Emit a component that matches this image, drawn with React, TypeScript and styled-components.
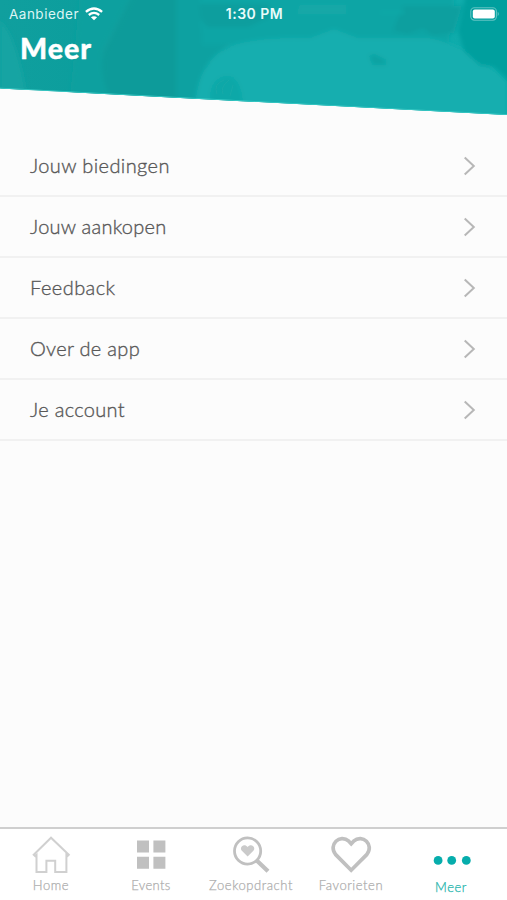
import React from 'react';
import styled, { createGlobalStyle } from 'styled-components';

const GlobalStyle = createGlobalStyle`
  * { box-sizing: border-box; }
  body { margin: 0; background: #fcfcfc; font-family: Lato, sans-serif; }
`;

const Screen = styled.div`
  display: flex;
  flex-direction: column;
  width: 507px;
  height: 900px;
  background: #fcfcfc;
  overflow: hidden;
`;

const Header = styled.header`
  position: relative;
  height: 136px;
  flex: none;
  color: #fff;
`;

const HeaderArt = styled.svg`
  position: absolute;
  inset: 0;
  display: block;
`;

const StatusBar = styled.div`
  position: relative;
  display: grid;
  grid-template-columns: 1fr auto 1fr;
  align-items: center;
  height: 27px;
  padding: 0 7px 0 9px;
  font-family: Inter, sans-serif;
`;

const Carrier = styled.div`
  display: flex;
  align-items: center;
  gap: 6px;
  color: #dcf5f4;
`;

const CarrierName = styled.span`
  font-size: 13.5px;
  line-height: 18px;
  letter-spacing: 0.5px;
`;

const Clock = styled.span`
  font-size: 14px;
  line-height: 18px;
  font-weight: 600;
  letter-spacing: 0.5px;
  color: #e9fbfa;
`;

const BatterySlot = styled.div`
  display: flex;
  justify-content: flex-end;
`;

const Title = styled.h1`
  position: relative;
  margin: 4px 0 0 20px;
  font-size: 28.5px;
  line-height: 34px;
  font-weight: 900;
  letter-spacing: 1px;
  -webkit-text-stroke: 0.4px #fff;
`;

const Menu = styled.nav`
  flex: 1;
`;

const MenuRow = styled.div`
  display: flex;
  align-items: center;
  justify-content: space-between;
  height: 61px;
  padding: 0 31px 0 30px;
  border-bottom: 2px solid #f1f1f1;
`;

const MenuLabel = styled.span<{ $spacing: number }>`
  margin-bottom: 2px;
  font-size: 20px;
  line-height: 26px;
  font-weight: 300;
  color: #585858;
  -webkit-text-stroke: 0.35px #585858;
  letter-spacing: ${(p) => p.$spacing}px;
`;

const TabBar = styled.footer`
  display: grid;
  grid-template-columns: repeat(5, 1fr);
  height: 73px;
  padding: 0 6px 0 1px;
  border-top: 2px solid #cfcfcf;
  background: #fff;
`;

const Tab = styled.div<{ $active?: boolean }>`
  display: flex;
  flex-direction: column;
  align-items: center;
  padding-top: ${(p) => (p.$active ? 8 : 6)}px;
`;

const TabLabel = styled.span<{ $spacing: number; $active?: boolean }>`
  font-size: 13px;
  line-height: 16px;
  margin-top: 2px;
  font-weight: 300;
  white-space: nowrap;
  color: ${(p) => (p.$active ? '#1fb5ad' : '#aeaeae')};
  -webkit-text-stroke: 0.25px currentColor;
  letter-spacing: ${(p) => p.$spacing}px;
`;

const HeaderPicture = () => (
  <HeaderArt width="507" height="136" viewBox="0 0 507 136">
    <defs>
      <clipPath id="slant"><path d="M0 0H507V115L0 88.5Z" /></clipPath>
      <linearGradient id="teal" x1="0" x2="1">
        <stop offset="0" stopColor="#109f9e" />
        <stop offset=".38" stopColor="#079d9c" />
        <stop offset=".5" stopColor="#13a8a8" />
        <stop offset="1" stopColor="#0dacac" />
      </linearGradient>
      <filter id="soft"><feGaussianBlur stdDeviation="2" /></filter>
    </defs>
    <g clipPath="url(#slant)">
      <path d="M0 0H507V120H0Z" fill="url(#teal)" />
      <g filter="url(#soft)">
        <path d="M0 20Q18 38 27 98H0Z" fill="#18a4a3" />
        <path d="M80 -5H132L103 50Q99 72 111 98H70Z" fill="#10a09f" />
        <path d="M133 -5H176V105H112Q98 70 104 52Z" fill="#079b9a" />
        <path d="M176 -5H200L207 28H245L205 65L195 105H176Z" fill="#0ea1a1" />
        <path d="M200 -5H455L448 45H202Z" fill="#10a5a5" />
        <path d="M200 4H269V17L248 27H208Q200 23 200 4Z" fill="#0b9e9e" />
        <path d="M195 105Q198 60 230 46Q260 36 310 38L334 29L358 38H430Q475 47 507 83V120H195Z" fill="#13aeaf" />
        <path d="M211 105Q207 81 225 76Q241 74 243 105Z" fill="#10a8a8" />
        <path d="M403 6H462L454 33L432 35L423 28L408 34L393 31Z" fill="#0a9f9f" />
        <path d="M466 -5H515V86L494 67L480 65L464 51L458 30Z" fill="#049f9e" />
        <path d="M369 56L374 54L386 60V65H373Z" fill="#0ca3a3" />
        <path d="M300 5H346V14H297ZM380 11H405V14H380Z" fill="#15a8a7" />
      </g>
      <path d="M217 94Q213 84 224 80M223 94Q220 87 229 80M230 96L233 85" fill="none" stroke="#20abaa" strokeWidth="1" opacity=".55" />
      <path d="M0 88.2L507 114.7" stroke="#39c9c5" strokeWidth="1" />
    </g>
  </HeaderArt>
);

const Wifi = () => (
  <svg width="18" height="14" viewBox="0 0 18 14" fill="none" stroke="#fff" strokeWidth="2.3">
    <path d="M.9 4.9Q9-2 17.1 4.9M3.8 8Q9 3.7 14.2 8" />
    <path d="M9 13.2L5.9 10.3Q9 8 12.1 10.3Z" fill="#fff" stroke="none" />
  </svg>
);

const Battery = () => (
  <svg width="30" height="14" viewBox="0 0 30 14">
    <rect x=".8" y=".8" width="25.6" height="12.4" rx="3.6" fill="none" stroke="#62c4c3" strokeWidth="1.1" />
    <rect x="2.8" y="2.6" width="22" height="8.8" rx="2" fill="#fff" />
    <path d="M27.7 4.8Q30 7 27.7 9.2Z" fill="#62c4c3" />
  </svg>
);

const Chevron = () => (
  <svg width="13" height="20" viewBox="0 0 13 20" fill="none" stroke="#b7b7b7" strokeWidth="2">
    <path d="M1.7 1.4L10.8 10L1.7 18.6" />
  </svg>
);

const HomeIcon = () => (
  <svg width="40" height="40" viewBox="0 0 40 40" fill="none" stroke="#d0d0d0" strokeWidth="2">
    <path d="M20 2.7L2.7 19.7L4.2 21.2L5.5 20V36.9H15.4V25.8H24.2V36.9H35.4V20L36.3 21.2L37.8 19.7Z" />
  </svg>
);

const GridIcon = () => (
  <svg width="40" height="40" viewBox="0 0 40 40" fill="#c0c0c0">
    <path d="M6 5.6H18V17.6H6ZM22.4 5.6H34.4V17.6H22.4ZM6 21.8H18V33.8H6ZM22.4 21.8H34.4V33.8H22.4Z" />
  </svg>
);

const SearchHeartIcon = () => (
  <svg width="40" height="40" viewBox="0 0 40 40" fill="none" stroke="#c0c0c0">
    <circle cx="16.6" cy="16" r="13.1" strokeWidth="2.8" />
    <path d="M26 25.7L37 36.3" strokeWidth="4.2" />
    <path d="M16.6 21.6L10.6 15.4C8 11.7 13.6 8 16.6 12C19.6 8 25.2 11.7 22.6 15.4Z" fill="#cacaca" stroke="none" />
  </svg>
);

const HeartIcon = () => (
  <svg width="42" height="40" viewBox="0 0 42 40" fill="none" stroke="#c0c0c0" strokeWidth="3.7">
    <path d="M21.2 35.2L5.5 19.4C-2 10 9.8-1.8 18.8 6.2L21.2 8.8L23.6 6.2C32.6-1.8 44.4 10 36.9 19.4Z" />
  </svg>
);

const DotsIcon = () => (
  <svg width="40" height="40" viewBox="0 0 40 40" fill="#06adac">
    <circle cx="7.1" cy="23.4" r="4.4" />
    <circle cx="20.7" cy="23.4" r="4.4" />
    <circle cx="35.3" cy="23.4" r="4.4" />
  </svg>
);

const menuItems = [
  { label: 'Jouw biedingen', spacing: 0.4 },
  { label: 'Jouw aankopen', spacing: 0.25 },
  { label: 'Feedback', spacing: 0.45 },
  { label: 'Over de app', spacing: 0.3 },
  { label: 'Je account', spacing: 0.3 },
];

const tabs = [
  { label: 'Home', spacing: 0.55, Icon: HomeIcon },
  { label: 'Events', spacing: 0.35, Icon: GridIcon },
  { label: 'Zoekopdracht', spacing: 0.55, Icon: SearchHeartIcon },
  { label: 'Favorieten', spacing: 0.55, Icon: HeartIcon },
  { label: 'Meer', spacing: 0.5, Icon: DotsIcon, active: true },
];

export default function App() {
  return (
    <Screen>
      <GlobalStyle />
      <Header>
        <HeaderPicture />
        <StatusBar>
          <Carrier><CarrierName>Aanbieder</CarrierName><Wifi /></Carrier>
          <Clock>1:30 PM</Clock>
          <BatterySlot><Battery /></BatterySlot>
        </StatusBar>
        <Title>Meer</Title>
      </Header>
      <Menu>
        {menuItems.map(({ label, spacing }) => (
          <MenuRow key={label}>
            <MenuLabel $spacing={spacing}>{label}</MenuLabel>
            <Chevron />
          </MenuRow>
        ))}
      </Menu>
      <TabBar>
        {tabs.map(({ label, spacing, Icon, active }) => (
          <Tab key={label} $active={active}>
            <Icon />
            <TabLabel $spacing={spacing} $active={active}>{label}</TabLabel>
          </Tab>
        ))}
      </TabBar>
    </Screen>
  );
}
